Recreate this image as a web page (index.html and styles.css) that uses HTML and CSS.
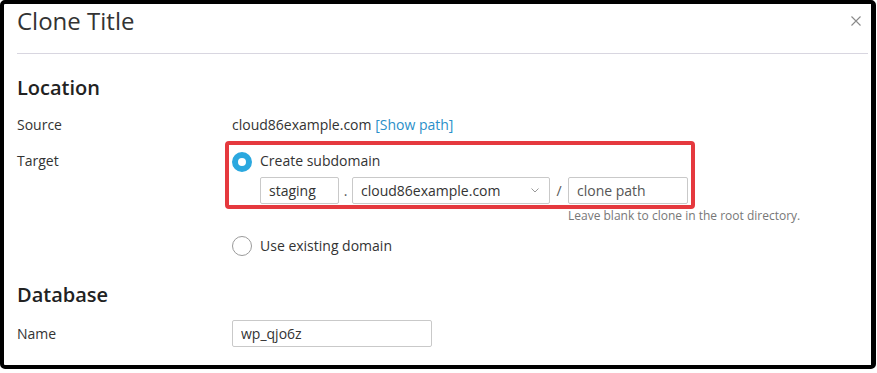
FILE: index.html
```html
<!DOCTYPE html>
<html lang="en">
<head>
    <meta charset="UTF-8">
    <title>Clone Title</title>
    <link rel="stylesheet" href="styles.css">
</head>
<body>
    <div class="frame">
        <div class="dialog-header">
            <h1 class="dialog-title">Clone Title</h1>
            <button class="close-btn" aria-label="Close">
                <svg width="10" height="10" viewBox="0 0 10 10">
                    <path d="M0.5 0.5 L9.5 9.5 M9.5 0.5 L0.5 9.5" stroke="#8a8a8a" stroke-width="1.1" fill="none"/>
                </svg>
            </button>
        </div>

        <h2 class="section-title first">Location</h2>

        <div class="form-row">
            <div class="form-label">Source</div>
            <div class="form-value">cloud86example.com <a href="#" class="link">[Show path]</a></div>
        </div>

        <div class="form-row target-row">
            <div class="form-label target-label">Target</div>
            <div class="form-value">
                <div class="highlight">
                    <label class="radio-line">
                        <span class="radio checked"></span>
                        Create subdomain
                    </label>
                    <div class="subdomain-fields">
                        <input type="text" class="field field-sub" value="staging">
                        <span class="sep sep-dot">.</span>
                        <div class="field field-select">
                            <span>cloud86example.com</span>
                            <svg width="8" height="5" viewBox="0 0 8 5">
                                <path d="M0.5 0.5 L4 4 L7.5 0.5" stroke="#999" stroke-width="1" fill="none"/>
                            </svg>
                        </div>
                        <span class="sep sep-slash">/</span>
                        <input type="text" class="field field-path" placeholder="clone path">
                    </div>
                </div>
                <div class="hint">Leave blank to clone in the root directory.</div>
                <label class="radio-line existing">
                    <span class="radio"></span>
                    Use existing domain
                </label>
            </div>
        </div>

        <h2 class="section-title">Database</h2>

        <div class="form-row name-row">
            <div class="form-label">Name</div>
            <div class="form-value">
                <input type="text" class="field field-name" value="wp_qjo6z">
            </div>
        </div>
    </div>
</body>
</html>
```

FILE: styles.css
```css
body {
    margin: 0;
    background-color: #fff;
    font-family: 'Open Sans', 'Noto Sans', sans-serif;
    color: #333;
}

.frame {
    box-sizing: border-box;
    width: 876px;
    height: 369px;
    border-style: solid;
    border-color: #000;
    border-width: 4px 5px 4px 4px;
    border-radius: 5px;
    background-color: #fff;
    padding: 1px 3px 0 13px;
    overflow: hidden;
}

.dialog-header {
    display: flex;
    justify-content: space-between;
    align-items: center;
    border-bottom: 1px solid #d8d6e0;
    padding-bottom: 16px;
}

.dialog-title {
    margin: 0;
    font-size: 24px;
    font-weight: 400;
    line-height: 32px;
    color: #333;
}

.close-btn {
    border: none;
    background: none;
    padding: 0;
    margin-right: 7px;
    width: 10px;
    height: 10px;
    display: flex;
    cursor: pointer;
}

.section-title {
    margin: 25px 0 11px;
    font-size: 20px;
    font-weight: 600;
    line-height: 28px;
    color: #222;
}

.section-title.first {
    margin: 20px 0 13px;
}

.form-row {
    display: flex;
    font-size: 14px;
    line-height: 20px;
}

.form-label {
    width: 215px;
    flex-shrink: 0;
}

.link {
    color: #2b8fc9;
    text-decoration: none;
}

.target-row {
    margin-top: 6px;
    align-items: flex-start;
}

.target-label {
    padding-top: 10px;
}

.highlight {
    display: inline-block;
    margin-left: -7px;
    border: 4px solid #e5393e;
    border-radius: 4px;
    padding: 6px 3px 1px 3px;
}

.radio-line {
    display: flex;
    align-items: flex-start;
    gap: 8px;
    cursor: pointer;
}

.radio {
    box-sizing: border-box;
    width: 20px;
    height: 20px;
    margin-top: 1px;
    border-radius: 50%;
    border: 1px solid #9a9a9a;
    background-color: #fff;
}

.radio.checked {
    border: 6px solid #2ba8df;
}

.subdomain-fields {
    display: flex;
    align-items: center;
    margin: 5px 0 0 28px;
}

.field {
    box-sizing: border-box;
    height: 27px;
    border: 1px solid #c9c9c9;
    border-radius: 2px;
    padding: 0 8px;
    font-family: inherit;
    font-size: 14px;
    color: #333;
    background-color: #fff;
    outline: none;
}

.field::placeholder {
    color: #555;
}

.field-sub {
    width: 79px;
}

.field-select {
    width: 198px;
    display: flex;
    align-items: center;
    justify-content: space-between;
    padding-right: 10px;
}

.field-path {
    width: 120px;
}

.field-name {
    width: 200px;
}

.sep {
    text-align: center;
    color: #555;
}

.sep-dot {
    width: 13px;
}

.sep-slash {
    width: 18px;
}

.hint {
    margin-left: 336px;
    font-size: 12px;
    line-height: 14px;
    color: #777;
}

.existing {
    margin-top: 13px;
}

.existing .radio {
    margin-top: 0;
}

.name-row {
    align-items: center;
}
```
